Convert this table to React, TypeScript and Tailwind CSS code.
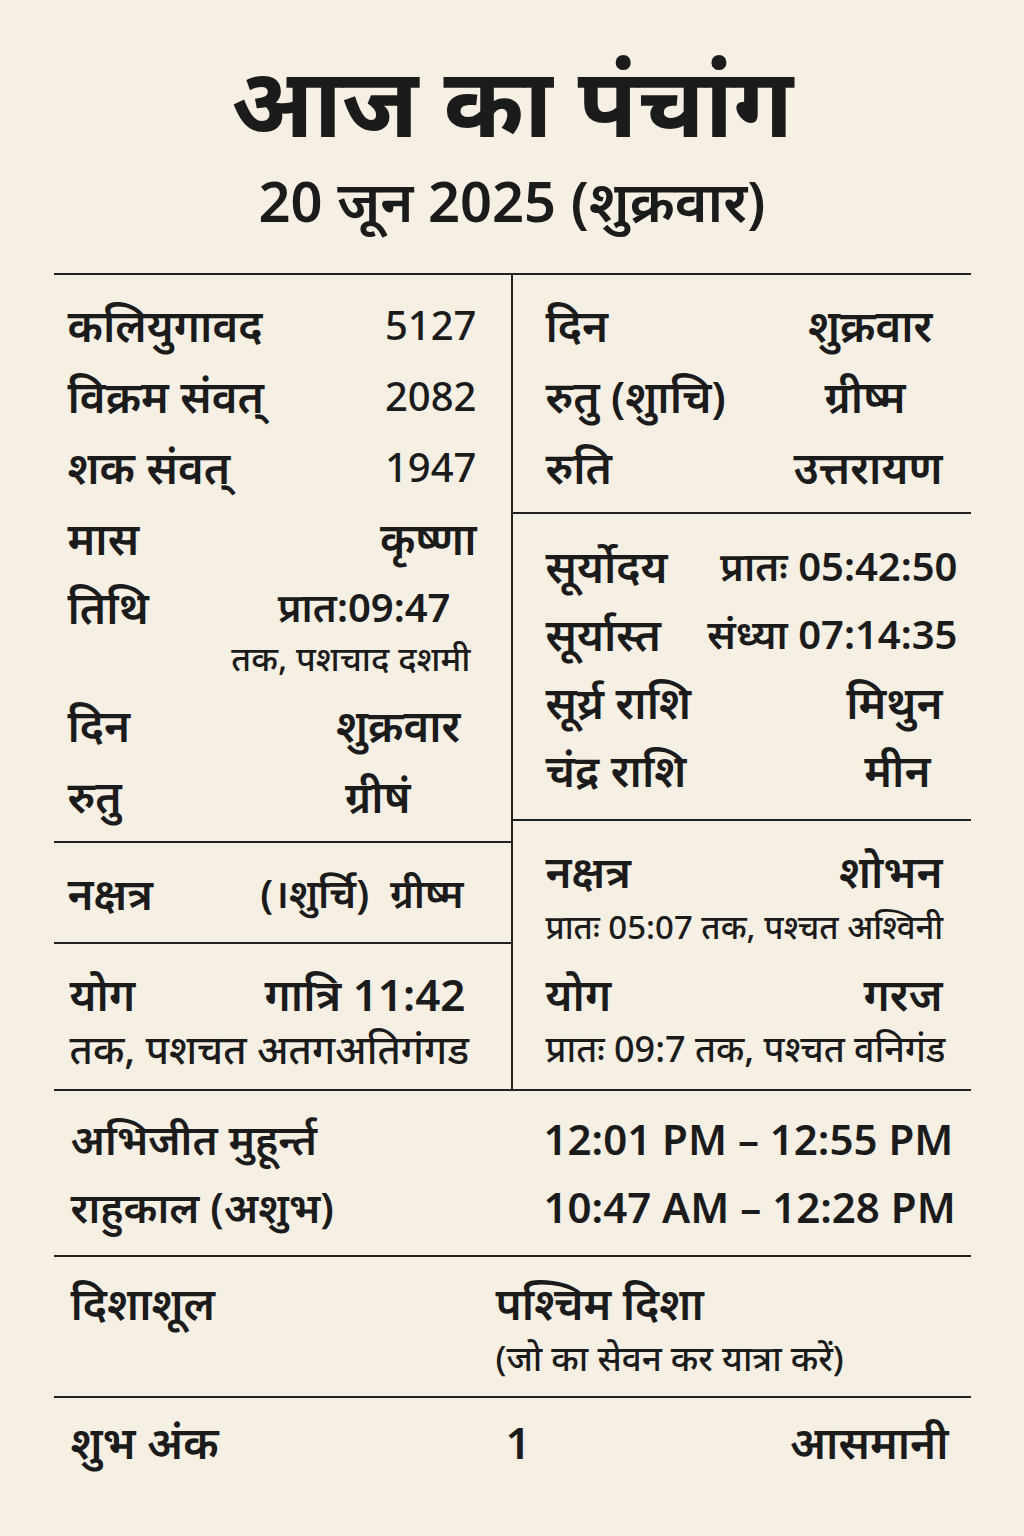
import React from "react";

type RowProps = {
  label: string;
  value?: string;
  className?: string;
  valueClass?: string;
};

const Row = ({ label, value, className = "", valueClass = "" }: RowProps) => (
  <div className={`flex items-center justify-between ${className}`}>
    <span>{label}</span>
    {value && <span className={valueClass}>{value}</span>}
  </div>
);

export default function App() {
  return (
    <div className="min-h-[1536px] w-full bg-[#f6efe3] text-[#1b1b1b] font-['Noto_Sans','Noto_Sans_Devanagari',sans-serif]">
      <div className="mx-auto w-[917px] pt-[40px]">
        <h1 className="text-center text-[97px] font-bold leading-[118px]">
          आज का पंचांग
        </h1>
        <h2 className="mt-[6px] text-center text-[56px] font-semibold leading-[72px]">
          20 जून 2025 (शुक्रवार)
        </h2>

        <div className="mt-[37px] grid grid-cols-[459px_458px] border-t-2 border-[#222] text-[44px] font-semibold leading-none">
          {/* left column */}
          <div className="border-r-2 border-[#222]">
            <div className="border-b-2 border-[#222] pb-[10px] pt-[14px] pl-[14px] pr-[34px]">
              <Row label="कलियुगावद" value="5127" className="h-[71px]" valueClass="text-[40px] font-medium" />
              <Row label="विक्रम संवत्" value="2082" className="h-[71px]" valueClass="text-[40px] font-medium" />
              <Row label="शक संवत्" value="1947" className="h-[71px]" valueClass="text-[40px] font-medium" />
              <Row label="मास" value="कृष्णा" className="h-[71px]" />
              <Row label="तिथि" value="प्रात:09:47" className="h-[68px]" valueClass="mr-[26px] text-[40px]" />
              <div className="flex h-[34px] items-center justify-end text-[34px] font-medium">
                <span className="mr-[6px]">तक, पशचाद दशमी</span>
              </div>
              <Row label="दिन" value="शुक्रवार" className="mt-[14px] h-[71px]" valueClass="mr-[16px]" />
              <Row label="रुतु" value="ग्रीषं" className="h-[71px]" valueClass="mr-[66px]" />
            </div>
            <div className="border-b-2 border-[#222] pl-[14px] pr-[47px]">
              <Row label="नक्षत्र" value="(।शुर्चि)  ग्रीष्म" className="h-[99px]" valueClass="text-[40px] whitespace-pre" />
            </div>
            <div className="pl-[16px] pr-[45px] pt-[15px]">
              <Row label="योग" value="गात्रि 11:42" className="h-[70px]" />
              <div className="flex h-[40px] items-center whitespace-nowrap text-[40px] font-medium">
                तक, पशचत अतगअतिगंगड
              </div>
            </div>
          </div>

          {/* right column */}
          <div>
            <div className="border-b-2 border-[#222] pb-[10px] pt-[14px] pl-[33px] pr-[36px]">
              <Row label="दिन" value="शुक्रवार" className="h-[71px]" valueClass="mr-[2px]" />
              <Row label="रुतु (शुाचि)" value="ग्रीष्म" className="h-[71px]" valueClass="mr-[29px]" />
              <Row label="रुति" value="उत्तरायण" className="h-[71px]" valueClass="mr-[-8px]" />
            </div>
            <div className="border-b-2 border-[#222] pb-[15px] pt-[18px] pl-[33px] pr-[13px]">
              <Row label="सूर्योदय" value="प्रातः 05:42:50" className="h-[68px]" valueClass="text-[40px]" />
              <Row label="सूर्यास्त" value="संध्या 07:14:35" className="h-[68px]" valueClass="text-[40px]" />
              <Row label="सूर्य्र राशि" value="मिथुन" className="h-[68px]" valueClass="mr-[15px]" />
              <Row label="चंद्र राशि" value="मीन" className="h-[68px]" valueClass="mr-[27px]" />
            </div>
            <div className="pl-[33px] pr-[28px] pb-[20px] pt-[15px]">
              <Row label="नक्षत्र" value="शोभन" className="h-[70px]" />
              <div className="flex h-[40px] items-center whitespace-nowrap text-[33px] font-medium">
                प्रातः 05:07 तक, पश्चत अश्विनी
              </div>
              <Row label="योग" value="गरज" className="mt-[13px] h-[70px]" />
              <div className="flex h-[40px] items-center whitespace-nowrap text-[36px] font-medium">
                प्रातः 09:7 तक, पश्चत वनिगंड
              </div>
            </div>
          </div>
        </div>

        {/* muhurt */}
        <div className="border-t-2 border-[#222] pb-[14px] pt-[14px] text-[42px] font-semibold leading-none">
          <div className="flex h-[68px] items-center pl-[17px]">
            <span className="w-[473px]">अभिजीत मुहूर्न्त</span>
            <span>12:01 PM – 12:55 PM</span>
          </div>
          <div className="flex h-[68px] items-center pl-[17px]">
            <span className="w-[473px]">राहुकाल (अशुभ)</span>
            <span>10:47 AM – 12:28 PM</span>
          </div>
        </div>

        {/* dishashool */}
        <div className="border-t-2 border-[#222] pb-[19px] pt-[12px] text-[44px] font-semibold leading-none">
          <div className="flex h-[68px] items-center pl-[17px]">
            <span className="w-[425px]">दिशाशूल</span>
            <span>पश्चिम दिशा</span>
          </div>
          <div className="flex h-[40px] items-center pl-[442px] text-[35px] font-medium">
            (जो का सेवन कर यात्रा करें)
          </div>
        </div>

        {/* shubh ank */}
        <div className="flex h-[90px] items-center border-t-2 border-[#222] pl-[17px] pr-[22px] text-[44px] font-semibold leading-none">
          <span className="w-[435px]">शुभ अंक</span>
          <span className="flex-1">1</span>
          <span>आसमानी</span>
        </div>
      </div>
    </div>
  );
}
